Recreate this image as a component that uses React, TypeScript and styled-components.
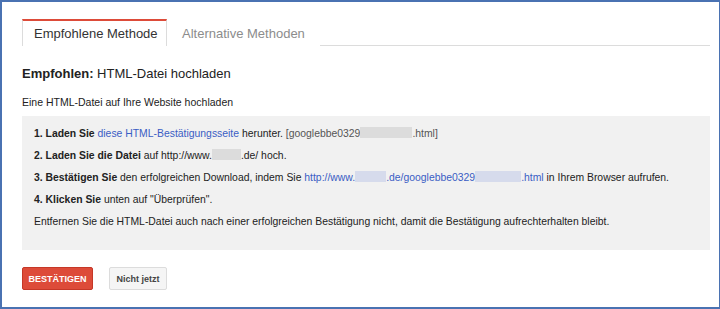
import { styled, createGlobalStyle } from 'styled-components';

const GlobalStyle = createGlobalStyle`
  html, body {
    margin: 0;
    padding: 0;
    background: #fff;
  }
  body {
    font-family: "Liberation Sans", Arial, sans-serif;
    color: #222;
  }
`;

const Frame = styled.div`
  box-sizing: border-box;
  width: 720px;
  height: 309px;
  border: 2px solid #4a72b2;
  border-right-width: 1px;
  padding: 17px 9px 0 20px;
  background: #fff;
`;

const TabBar = styled.div`
  display: flex;
  border-bottom: 1px solid #dcdcdc;
  height: 26px;
`;

const Tab = styled.div<{ $active?: boolean }>`
  box-sizing: border-box;
  height: 27px;
  padding: 0 ${({ $active }) => ($active ? '11px' : '14px')};
  display: flex;
  align-items: center;
  white-space: nowrap;
  font-size: 13px;
  color: ${({ $active }) => ($active ? '#333' : '#8c8c8c')};
  background: #fff;
  border-top: 2px solid ${({ $active }) => ($active ? '#dd4b39' : 'transparent')};
  border-left: 1px solid ${({ $active }) => ($active ? '#dcdcdc' : 'transparent')};
  border-right: 1px solid ${({ $active }) => ($active ? '#dcdcdc' : 'transparent')};
  width: ${({ $active }) => ($active ? '145px' : 'auto')};
`;

const Heading = styled.h2`
  margin: 18px 0 0;
  font-size: 13px;
  font-weight: normal;
  line-height: 20px;
  color: #222;
  b {
    font-weight: bold;
  }
`;

const Intro = styled.p`
  margin: 10px 0 0;
  font-size: 10.5px;
  line-height: 16px;
`;

const Steps = styled.div`
  margin-top: 6px;
  background: #f1f1f1;
  padding: 7px 12px 17px;
  font-size: 10.4px;
  line-height: 22px;
`;

const Line = styled.div`
  white-space: nowrap;
  b {
    font-weight: bold;
  }
`;

const Link = styled.span`
  color: #3a5dc4;
`;

const Muted = styled.span`
  color: #555;
`;

const Blur = styled.span<{ $w: number; $link?: boolean }>`
  display: inline-block;
  width: ${({ $w }) => $w}px;
  height: 11px;
  vertical-align: -1px;
  background: ${({ $link }) => ($link ? '#d6dbec' : '#dcdcdc')};
`;

const Actions = styled.div`
  display: flex;
  gap: 16px;
  margin-top: 17px;
`;

const Button = styled.button<{ $primary?: boolean }>`
  box-sizing: border-box;
  height: 23px;
  padding: 0;
  white-space: nowrap;
  font-family: "Liberation Sans", Arial, sans-serif;
  font-size: 9px;
  font-weight: bold;
  border-radius: 2px;
  border: 1px solid ${({ $primary }) => ($primary ? '#c53727' : '#dcdcdc')};
  background: ${({ $primary }) => ($primary ? '#dd4b39' : '#f5f5f5')};
  color: ${({ $primary }) => ($primary ? '#fff' : '#444')};
  width: ${({ $primary }) => ($primary ? '71px' : '58px')};
`;

export default function App() {
  return (
    <>
      <GlobalStyle />
      <Frame>
        <TabBar>
          <Tab $active>Empfohlene Methode</Tab>
          <Tab>Alternative Methoden</Tab>
        </TabBar>
        <Heading>
          <b>Empfohlen:</b> HTML-Datei hochladen
        </Heading>
        <Intro>Eine HTML-Datei auf Ihre Website hochladen</Intro>
        <Steps>
          <Line>
            <b>1. Laden Sie</b> <Link>diese HTML-Bestätigungsseite</Link> herunter.{' '}
            <Muted>
              [googlebbe0329<Blur $w={52} />.html]
            </Muted>
          </Line>
          <Line>
            <b>2. Laden Sie die Datei</b> auf http://www.<Blur $w={29} />.de/ hoch.
          </Line>
          <Line>
            <b>3. Bestätigen Sie</b> den erfolgreichen Download, indem Sie{' '}
            <Link>
              http://www.<Blur $w={31} $link />.de/googlebbe0329<Blur $w={46} $link />.html
            </Link>{' '}
            in Ihrem Browser aufrufen.
          </Line>
          <Line>
            <b>4. Klicken Sie</b> unten auf "Überprüfen".
          </Line>
          <Line>
            Entfernen Sie die HTML-Datei auch nach einer erfolgreichen Bestätigung nicht, damit die
            Bestätigung aufrechterhalten bleibt.
          </Line>
        </Steps>
        <Actions>
          <Button $primary>BESTÄTIGEN</Button>
          <Button>Nicht jetzt</Button>
        </Actions>
      </Frame>
    </>
  );
}
